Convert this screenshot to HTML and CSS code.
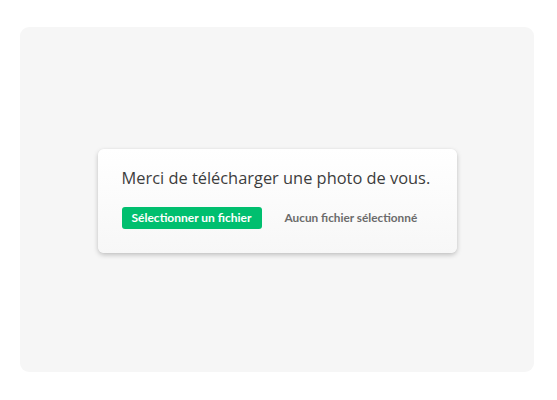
FILE: index.html
```html
<!DOCTYPE html>
<html lang="fr">
<head>
<meta charset="utf-8">
<link rel="stylesheet" href="styles.css">
</head>
<body>
<div class="panel">
  <div class="card">
    <p class="prompt">Merci de télécharger une photo de vous.</p>
    <div class="file-row">
      <span class="btn">Sélectionner un fichier</span>
      <span class="status">Aucun fichier sélectionné</span>
    </div>
  </div>
</div>
</body>
</html>
```
FILE: styles.css
```css
html, body { margin: 0; padding: 0; background: #ffffff; }
body {
  width: 557px;
  height: 400px;
  box-sizing: border-box;
  padding: 27px 23px 28px 20px;
  font-family: Lato, "Liberation Sans", sans-serif;
}
.panel {
  height: 100%;
  background: #f6f6f6;
  border-radius: 9px;
  display: flex;
  align-items: center;
  justify-content: center;
}
.card {
  width: 359px;
  height: 104px;
  box-sizing: border-box;
  padding: 18px 24px 0 24px;
  background: linear-gradient(#ffffff, #f7f7f7);
  border-radius: 6px;
  box-shadow: 0 2px 5px rgba(0,0,0,0.22), 0 0 1px rgba(0,0,0,0.08);
  margin-top: 2px;
}
.prompt {
  margin: 0;
  font-family: "Open Sans", Lato, sans-serif;
  font-size: 16.4px;
  line-height: 22px;
  color: #3d3d3d;
}
.file-row {
  margin-top: 18px;
  display: flex;
  align-items: center;
  gap: 23px;
}
.btn {
  width: 140px;
  height: 22px;
  box-sizing: border-box;
  background: #00bf6f;
  color: #ffffff;
  border-radius: 3px;
  font-size: 12px;
  font-weight: 700;
  display: flex;
  align-items: center;
  justify-content: center;
}
.status {
  font-size: 11.8px;
  font-weight: 700;
  color: #6b6b6b;
}
```
